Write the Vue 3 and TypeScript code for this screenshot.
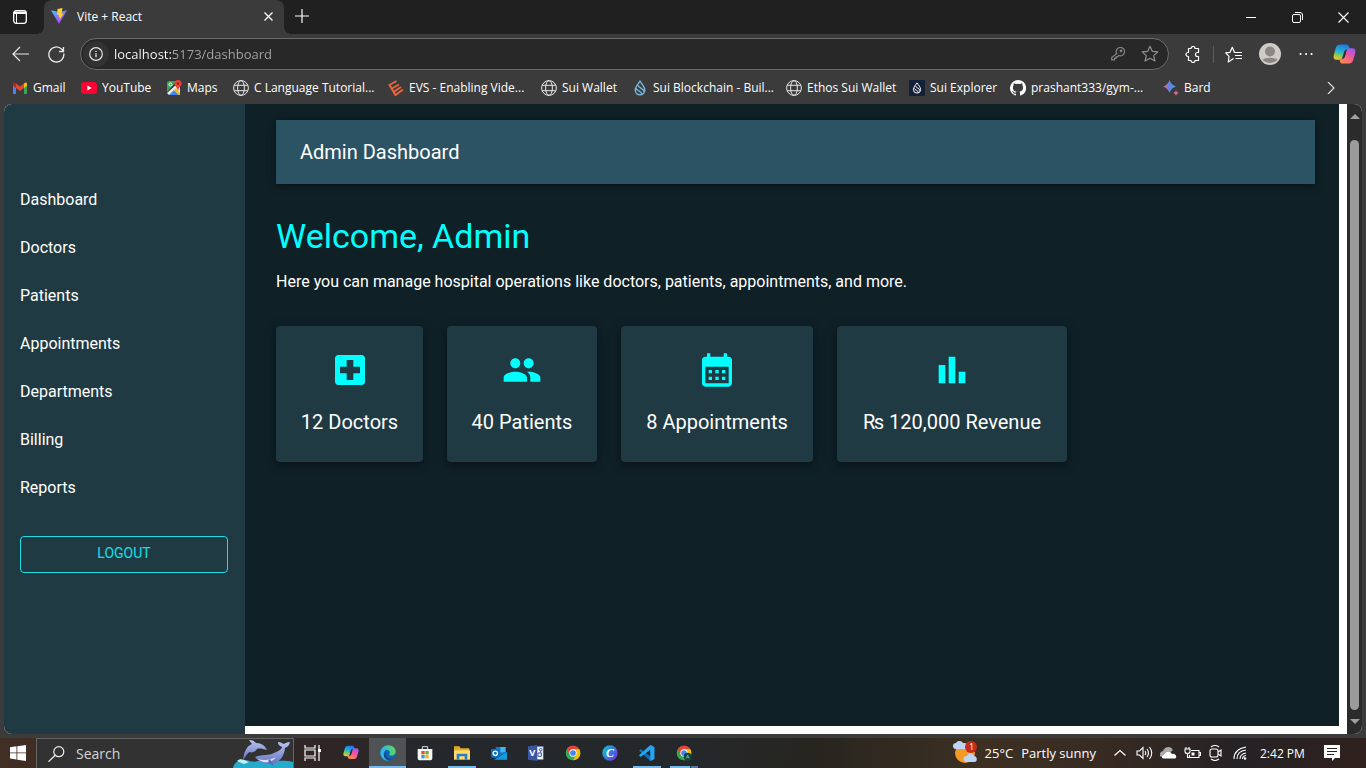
<script setup lang="ts">
import { ref } from 'vue'

interface Item { label: string; icon: string }
interface TaskApp extends Item { state?: 'active' | 'open' | 'multi' }

const address = ref('localhost:5173/dashboard')
const search = ref('')

const globe = '<g fill="none" stroke="#e8e8e8" stroke-width="1"><circle cx="8" cy="8" r="7.4"/><ellipse cx="8" cy="8" rx="3.4" ry="7.4"/><path d="M1.3 5.3h13.4M1.3 10.7h13.4"/></g>'
const drop = 'M8 1.2C6 4.2 3.2 7 3.2 10a4.8 4.8 0 0 0 9.6 0C12.800 7 10 4.200 8 1.200zM6 5.200c.3 2.800 6.300 3.300 6.200 6.800M3.800 8.300c1.400 3 5.800 2.200 6 6'

const icons: Record<string, string> = {
  gmail: '<path fill="#4285f4" d="M1 4v10h3V7z"/><path fill="#34a853" d="M12 7v7h3V4z"/><path fill="#fbbc04" d="M12 3.500V8l3-2.300V4c0-1.500-1.500-2-3-.5z"/><path fill="#c5221f" d="M1 4v1.700L4 8V3.500C2.500 2.300 1 2.600 1 4z"/><path fill="#ea4335" d="M4 3.500 8 6.600l4-3.100V8l-4 3-4-3z"/>',
  youtube: '<rect x="0" y="2" width="16" height="12" rx="3" fill="#ff0033"/><path fill="#fff" d="M6.300 5.400v5.200L10.800 8z"/>',
  maps: '<path fill="#34a853" d="M1 3a2 2 0 0 1 2-2h8L1 12z"/><path fill="#e8eaed" d="m1 13 10-9 3 3v8H3z"/><path fill="#4285f4" d="m3 15 5-5 5 5z"/><path fill="#fbbc04" d="m8 10 2-2 4 5v2h-1z"/><circle cx="4.500" cy="4.500" r="1.500" fill="none" stroke="#fff"/><path fill="#ea4335" d="M12 0a3.500 3.500 0 0 0-3.500 3.500C8.500 6 11.300 7 12 11c.7-4 3.500-5 3.500-7.500A3.500 3.500 0 0 0 12 0z"/><circle cx="12" cy="3.500" r="1.200" fill="#901c16"/>',
  globe,
  evs: '<path fill="none" stroke="#e8643c" stroke-width="2" d="M8.500 1 1.500 5l6 10 7.500-5.500M4 8.500l7-4M6.300 11.500 13 7"/>',
  sui: `<path fill="none" stroke="#78b4dc" stroke-width="1.400" d="${drop}"/>`,
  explorer: `<path fill="#142038" d="M0 0h16v16H0z"/><path fill="none" stroke="#fff" stroke-width="1.300" transform="translate(2 2) scale(.75)" d="${drop}"/>`,
  github: '<path fill="#fff" d="M8 0a8 8 0 0 0-2.500 15.600c.4.100.5-.2.500-.4v-1.500c-2.200.5-2.700-1-2.700-1-.4-.9-.9-1.200-.9-1.200-.7-.5.1-.5.100-.5.800.1 1.200.8 1.200.8.7 1.200 1.900.9 2.300.7.1-.5.300-.9.500-1.100-1.800-.2-3.600-.9-3.600-4 0-.9.300-1.600.8-2.100-.1-.2-.4-1 .1-2.100 0 0 .7-.2 2.200.8a8 8 0 0 1 4 0c1.500-1 2.200-.8 2.200-.8.4 1.100.2 1.900.1 2.100.5.600.8 1.300.8 2.100 0 3.100-1.900 3.800-3.700 4 .3.300.6.800.6 1.500v2.300c0 .2.100.5.600.4A8 8 0 0 0 8 0z"/>',
  bard: '<path fill="url(#bard)" d="M6.500 0C7.800 3.600 9.400 5.200 13 6.500 9.400 7.800 7.800 9.400 6.500 13 5.200 9.400 3.600 7.800 0 6.500 3.600 5.200 5.200 3.600 6.500 0z"/><path fill="#d86890" d="M13 10c.6 1.900 1.100 2.400 3 3-1.900.6-2.400 1.100-3 3-.6-1.900-1.100-2.400-3-3 1.900-.6 2.400-1.100 3-3z"/>',
  copilot: '<path fill="url(#copBlue)" d="M8 1h6c1.500 0 2.400 1 2.800 2.500L17.500 6H15c-2 0-3 1-3.500 3L9.800 14.500C9.300 16.200 8 17 6.500 17H4c-3 0-4-2-3.200-5L3 4.500C3.700 2 5.500 1 8 1z"/><path fill="url(#copPink)" d="M16 21h-6c-1.500 0-2.400-1-2.800-2.500L6.500 16H9c2 0 3-1 3.500-3l1.700-5.500C14.700 5.800 16 5 17.500 5H20c3 0 4 2 3.200 5L21 17.500c-.7 2.500-2.500 3.500-5 3.500z"/><path fill="#2a2a30" d="M12.800 8.500h1.200l-2.300 6.300c-.3.600-.8.700-1.400.7z"/>',
  edge: '<circle cx="12" cy="12" r="11.500" fill="#0c67b8"/><path fill="url(#edgeTop)" d="M.6 11C1.200 4.800 6 .5 12 .5c6.600 0 11.500 4.300 11.500 9.300 0 3.700-2.900 6-6 6-2.200 0-3.700-.7-3.700-1.500 0-.6 1-1.200 1-2.900C14.800 9 12.700 7 9.500 7 5 7 1.500 9 .6 11z"/><path fill="#35b9e8" d="M.6 11C2 8 5.500 6.500 9.500 7c-2.500 1-4 3.400-4 6.500 0 5 3 9 7 10C5.500 24 .2 18 .6 11z"/><path fill="#174b8c" d="M9.600 11c-2.500 5 2 10.500 8 9.500 2-.4 3-1 4-1.700-4 4.500-12 5-15 0-1.500-3-.5-6 3-7.800z"/>',
  store: '<path fill="none" stroke="#ddd" stroke-width="1.500" d="M8 6V2.500h8V6"/><path fill="#f6f6f6" d="M1 6h22v13a4 4 0 0 1-4 4H5a4 4 0 0 1-4-4z"/><path fill="#e85227" d="M6.500 9h5v5h-5z"/><path fill="#72ad20" d="M12.500 9h5v5h-5z"/><path fill="#28a1dc" d="M6.500 15h5v5h-5z"/><path fill="#f5b51a" d="M12.500 15h5v5h-5z"/>',
  files: '<path fill="#e6a824" d="M0 2h8l2 3h13v16H0z"/><path fill="#ffdc6b" d="M0 8h24v14H0z"/><path fill="#287fc8" d="M4 13h16v9h-4v-5H8v5H4z"/>',
  outlook: '<path fill="#1976c5" d="M7 3h14v13H7z"/><path fill="#42b8f0" d="M14 3h8v8h-8z"/><path fill="#083f86" d="m5 11 9 5 10-6v12H5z"/><path fill="#1599dd" d="m5 22 19-12v12z"/><rect x="0" y="6" width="13" height="13" rx="1.500" fill="#096dc6"/><circle cx="6.500" cy="12.500" r="3.200" fill="none" stroke="#fff" stroke-width="2"/>',
  visio: '<path fill="#fff" stroke="#3955a3" stroke-width="1" d="M12 2h11v20H12z"/><path fill="#3955a3" d="M0 2 14 0v24L0 22z"/><text x="2" y="17" fill="#fff" font-family="Open Sans, sans-serif" font-size="14" font-weight="700">V</text><g fill="none" stroke="#3955a3" stroke-width="1.500"><circle cx="19" cy="7" r="2"/><path d="M15 12h5v5h-5zM19 9v3"/></g>',
  chrome: '<circle cx="12" cy="12" r="11" fill="#34a853"/><path fill="#ea4335" d="M2.500 6.500A11 11 0 0 1 21.500 6.500H12L7.500 15z"/><path fill="#fbbc04" d="M12 6.500h9.500A11 11 0 0 1 12 23l5-8z"/><circle cx="12" cy="12" r="5.500" fill="#fff"/><circle cx="12" cy="12" r="4.300" fill="#4285f4"/>',
  canva: '<circle cx="12" cy="12" r="11.500" fill="url(#canva)"/><text x="6" y="18" fill="#fff" font-family="Liberation Serif, serif" font-style="italic" font-weight="700" font-size="18">C</text>',
  code: '<path fill="#0a72b9" d="m17 0 6 3v18l-6 3L0 8.500 2.500 6 17 17z"/><path fill="#27a5f0" d="m17 0 6 3v18l-6 3V7L2.500 18 0 15.500z"/>',
  hospital: '<path d="M19 3H5c-1.100 0-1.990.9-1.990 2L3 19c0 1.100.9 2 2 2h14c1.100 0 2-.9 2-2V5c0-1.100-.9-2-2-2zm-1 11h-4v4h-4v-4H6v-4h4V6h4v4h4v4z"/>',
  people: '<path d="M16 11c1.660 0 2.990-1.340 2.990-3S17.660 5 16 5c-1.660 0-3 1.340-3 3s1.340 3 3 3zm-8 0c1.660 0 2.990-1.340 2.990-3S9.660 5 8 5C6.340 5 5 6.340 5 8s1.340 3 3 3zm0 2c-2.330 0-7 1.170-7 3.500V19h14v-2.500c0-2.330-4.670-3.500-7-3.500zm8 0c-.29 0-.62.020-.97.050 1.160.84 1.970 1.970 1.970 3.450V19h6v-2.500c0-2.330-4.670-3.500-7-3.500z"/>',
  calendar: '<path d="M19 4h-1V2h-2v2H8V2H6v2H5c-1.110 0-1.990.9-1.990 2L3 20c0 1.100.89 2 2 2h14c1.100 0 2-.9 2-2V6c0-1.100-.9-2-2-2zm0 16H5V10h14v10zM9 14H7v-2h2v2zm4 0h-2v-2h2v2zm4 0h-2v-2h2v2zm-8 4H7v-2h2v2zm4 0h-2v-2h2v2zm4 0h-2v-2h2v2z"/>',
  chart: '<path d="M4 9h4v11H4zm12 4h4v7h-4zm-6-9h4v16h-4z"/>'
}
icons.profile = icons.chrome + '<circle cx="17.500" cy="17.500" r="6" fill="#11463f"/><path fill="none" stroke="#8fc7b8" d="m15.500 20 2-5 2 5m-3.300-1.500h2.600"/>'

const bookmarks: Item[] = [
  { label: 'Gmail', icon: 'gmail' },
  { label: 'YouTube', icon: 'youtube' },
  { label: 'Maps', icon: 'maps' },
  { label: 'C Language Tutorial...', icon: 'globe' },
  { label: 'EVS - Enabling Vide...', icon: 'evs' },
  { label: 'Sui Wallet', icon: 'globe' },
  { label: 'Sui Blockchain - Buil...', icon: 'sui' },
  { label: 'Ethos Sui Wallet', icon: 'globe' },
  { label: 'Sui Explorer', icon: 'explorer' },
  { label: 'prashant333/gym-...', icon: 'github' },
  { label: 'Bard', icon: 'bard' }
]

const sections = ['Dashboard', 'Doctors', 'Patients', 'Appointments', 'Departments', 'Billing', 'Reports']

const stats: Item[] = [
  { label: '12 Doctors', icon: 'hospital' },
  { label: '40 Patients', icon: 'people' },
  { label: '8 Appointments', icon: 'calendar' },
  { label: '₨ 120,000 Revenue', icon: 'chart' }
]

const apps: TaskApp[] = [
  { label: 'Copilot', icon: 'copilot' },
  { label: 'Microsoft Edge', icon: 'edge', state: 'active' },
  { label: 'Microsoft Store', icon: 'store' },
  { label: 'File Explorer', icon: 'files', state: 'open' },
  { label: 'Outlook', icon: 'outlook' },
  { label: 'Visio', icon: 'visio' },
  { label: 'Google Chrome', icon: 'chrome' },
  { label: 'Canva', icon: 'canva' },
  { label: 'Visual Studio Code', icon: 'code', state: 'open' },
  { label: 'Chrome profile', icon: 'profile', state: 'multi' }
]
</script>

<template>
  <div class="desktop">
    <svg class="defs" width="0" height="0" aria-hidden="true">
      <defs>
        <linearGradient id="bard" x1="0" x2="1"><stop offset="0" stop-color="#e8647c" /><stop offset=".6" stop-color="#4f88f4" /><stop offset="1" stop-color="#50a0e8" /></linearGradient>
        <linearGradient id="copBlue" x1=".6" y1="0" x2=".3" y2="1"><stop offset="0" stop-color="#1a78e8" /><stop offset=".5" stop-color="#25b6d2" /><stop offset=".75" stop-color="#8ccb50" /><stop offset="1" stop-color="#f0c830" /></linearGradient>
        <linearGradient id="copPink" x1=".8" y1="0" x2=".2" y2="1"><stop offset="0" stop-color="#9a58f0" /><stop offset=".45" stop-color="#f0559c" /><stop offset="1" stop-color="#ff8a48" /></linearGradient>
        <linearGradient id="edgeTop" x1="0" x2="1"><stop offset="0" stop-color="#2bb4e8" /><stop offset="1" stop-color="#5fd85a" /></linearGradient>
        <linearGradient id="canva" x1="0" y1=".2" x2="1" y2=".9"><stop offset="0" stop-color="#10c4cf" /><stop offset=".5" stop-color="#3478dc" /><stop offset="1" stop-color="#7d2ae8" /></linearGradient>
        <linearGradient id="vite" x1="0" y1="0" x2=".6" y2="1"><stop offset="0" stop-color="#41c8ff" /><stop offset="1" stop-color="#bd34fe" /></linearGradient>
        <linearGradient id="whale" x1="0" y1="0" x2="0" y2="1"><stop offset="0" stop-color="#b9c4f4" /><stop offset="1" stop-color="#6673bd" /></linearGradient>
      </defs>
    </svg>

    <header class="browser">
      <div class="tabstrip">
        <button class="tab-menu" aria-label="Tab actions">
          <svg width="14" height="14" viewBox="0 0 14 14"><rect x=".7" y=".7" width="12.600" height="12.600" rx="2.500" fill="none" stroke="#fff" stroke-width="1.300" /><path fill="#fff" d="M1 1.500h12V4H1z" /><path stroke="#fff" d="M3.500 4v9" /></svg>
        </button>
        <div class="tab">
          <svg width="16" height="16" viewBox="0 0 16 16"><path fill="url(#vite)" d="M0 2.200 8 16 16 2.200 8.500 4z" /><path fill="#ffd028" d="m11.500 0-5 1-.5 6 2-.4-.5 3 1.500-.4-.6 3L12.500 5.500l-2 .4z" /></svg>
          <span class="tab-title">Vite + React</span>
          <button aria-label="Close tab"><svg width="9" height="9" viewBox="0 0 9 9"><path stroke="#fff" stroke-width="1.300" d="m.5.5 8 8m0-8-8 8" /></svg></button>
        </div>
        <button class="new-tab" aria-label="New tab"><svg width="14" height="14" viewBox="0 0 14 14"><path stroke="#fff" stroke-width="1.200" d="M7 0v14M0 7h14" /></svg></button>
        <div class="window-buttons">
          <button aria-label="Minimize"><svg width="10" height="10" viewBox="0 0 10 10"><path stroke="#fff" d="M0 5.500h10" /></svg></button>
          <button aria-label="Restore"><svg width="11" height="11" viewBox="0 0 11 11"><g fill="none" stroke="#fff"><rect x=".5" y="2.500" width="8" height="8" rx="1.500" /><path d="M3 .5h5a2.500 2.500 0 0 1 2.500 2.500v5" /></g></svg></button>
          <button aria-label="Close"><svg width="11" height="11" viewBox="0 0 11 11"><path stroke="#fff" stroke-width="1.200" d="m.5.5 10 10m0-10-10 10" /></svg></button>
        </div>
      </div>

      <div class="toolbar">
        <div class="nav-buttons">
          <button aria-label="Back"><svg width="17" height="16" viewBox="0 0 17 16"><path fill="none" stroke="#e8e8e8" stroke-width="1.200" d="M8 1 1 8l7 7M1 8h16" /></svg></button>
          <button aria-label="Refresh"><svg width="17" height="17" viewBox="0 0 17 17"><path fill="none" stroke="#e8e8e8" stroke-width="1.300" d="M15.800 7.500a7.500 7.500 0 1 1-2-4.200L15.500 5M15.500 1v4.500H11" /></svg></button>
        </div>
        <div class="address">
          <button class="site-info" aria-label="Site information"><svg width="14" height="14" viewBox="0 0 14 14"><circle cx="7" cy="7" r="6.300" fill="none" stroke="#e4e4e4" stroke-width="1.200" /><path stroke="#e4e4e4" stroke-width="1.300" d="M7 6.200v4M7 3.700V5" /></svg></button>
          <input v-model="address" aria-label="Address" type="text" spellcheck="false">
          <button aria-label="Saved passwords"><svg width="14" height="14" viewBox="0 0 14 14"><g fill="none" stroke="#858585" stroke-width="1.200"><path d="M5.700 6.600A4.200 4.200 0 1 1 7.800 8.500L6.500 9.800H5v1.500H3.500v1.500H.7v-2.200z" /><circle cx="10" cy="4" r=".8" /></g></svg></button>
          <button aria-label="Add to favorites"><svg width="18" height="18" viewBox="0 0 18 18"><path fill="none" stroke="#909090" stroke-width="1.200" stroke-linejoin="round" d="m9 1.300 2.300 5 5.500.6-4.100 3.700 1.200 5.400L9 13.300 4.100 16l1.200-5.400L1.200 6.900l5.500-.6z" /></svg></button>
        </div>
        <div class="tools">
          <button class="extensions" aria-label="Extensions"><svg width="16" height="17" viewBox="0 0 16 17"><path fill="none" stroke="#fff" stroke-width="1.200" stroke-linejoin="round" d="M3.500 2.500H6a2 2 0 0 1 4 0h3.500v4h-1a2 2 0 1 0 0 4h1v4H10a2 2 0 0 1-4 0H3.500v-4H3a2 2 0 0 1 0-4h.5z" /></svg></button>
          <button class="favorites" aria-label="Favorites"><svg width="17" height="17" viewBox="0 0 17 17"><path fill="none" stroke="#fff" stroke-width="1.200" stroke-linejoin="round" d="M11 6.500H9.500L7.300 1.300 5 6.300l-4.300.6 3.300 3.500L3.300 16l5.200-3.500M11 6.500h6M10 9.500h7M10.500 12.500H17" /></svg></button>
          <button aria-label="Profile"><svg width="22" height="22" viewBox="0 0 22 22"><circle cx="11" cy="11" r="11" fill="#cfcbc6" /><circle cx="11" cy="8.500" r="5" fill="#8b8783" /><path fill="#8b8783" d="M3.500 17c2-3 13-3 15 0a11 11 0 0 1-15 0z" /></svg></button>
          <button aria-label="Settings and more"><svg width="14" height="4" viewBox="0 0 14 4"><path stroke="#fff" stroke-width="2" stroke-linecap="round" d="M1.500 2h.1M7 2h.1M12.500 2h.1" /></svg></button>
          <button class="copilot" aria-label="Copilot"><svg width="23" height="22" viewBox="0 0 24 22" v-html="icons.copilot"></svg></button>
        </div>
      </div>

      <nav class="bookmarks" aria-label="Favorites bar">
        <a v-for="b in bookmarks" :key="b.label" href="#"><svg width="16" height="16" viewBox="0 0 16 16" v-html="icons[b.icon]"></svg><span>{{ b.label }}</span></a>
        <button aria-label="More favorites"><svg width="8" height="12" viewBox="0 0 8 12"><path fill="none" stroke="#ddd" stroke-width="1.200" d="m1 0 6 6-6 6" /></svg></button>
      </nav>
    </header>

    <div class="viewport">
      <div class="page">
        <aside class="sidebar">
          <nav aria-label="Sections"><a v-for="s in sections" :key="s" href="#">{{ s }}</a></nav>
          <button class="logout">LOGOUT</button>
        </aside>
        <main class="content">
          <header class="appbar">Admin Dashboard</header>
          <h1>Welcome, Admin</h1>
          <p>Here you can manage hospital operations like doctors, patients, appointments, and more.</p>
          <div class="cards">
            <section v-for="s in stats" :key="s.label" class="card">
              <svg width="40" height="40" viewBox="0 0 24 24" fill="#00ffff" v-html="icons[s.icon]"></svg>
              <h2>{{ s.label }}</h2>
            </section>
          </div>
        </main>
      </div>
      <div class="scrollbar" aria-hidden="true"><i class="up"></i><i class="thumb"></i><i class="down"></i></div>
    </div>

    <footer class="taskbar">
      <button class="start" aria-label="Start"><svg width="16" height="16" viewBox="0 0 16 16"><path fill="#fff" d="m0 2.200 6.500-.9v6.200H0zM7.300 1.200 16 0v7.500H7.300zM0 8.300h6.500v6.200L0 13.600zM7.300 8.300H16V16l-8.700-1.200z" /></svg></button>
      <label class="search">
        <svg width="17" height="16" viewBox="0 0 17 16"><g fill="none" stroke="#eee" stroke-width="1.200"><circle cx="10.800" cy="5.700" r="5" /><path d="m7.200 9.300-6.700 6.400" /></g></svg>
        <input v-model="search" aria-label="Search" type="search" placeholder="Search">
        <svg class="dolphins" width="60" height="28" viewBox="0 0 60 28"><path fill="#28aacb" d="M0 28c1-5 5-8 10-8 7 0 9 3 15 1 6-1 8 2 15 1s10-2 20 0v6z" /><path fill="#bff2f6" d="M4 21c4-4 8 0 12 1l-5 2z" /><path fill="url(#whale)" d="M10 20c1-9 4-14 9-16l-3-4c4 0 5 1 7 3 6 0 9 3 11 7-4-1-7-2-10-1-2 3-5 4-7 3-3 1-4 4-7 8z" /><path fill="url(#whale)" d="M22 17c8-3 13-1 19-4 5-2 8-4 8-6-3-1-4-3-4-5 3 0 5 2 6 2 1-1 3-2 6-2-1 4-3 5-5 6-1 9-6 15-13 16-8 0-13-2-17-7z" /><path fill="#dae0ff" d="M25 19c6 2 13 1 18-2-3 5-12 8-18 2z" /><path fill="#5b67ae" d="m37 19 4 8-6-6z" /></svg>
      </label>
      <button class="task-view" aria-label="Task view"><svg width="17" height="16" viewBox="0 0 17 16"><g fill="none" stroke="#fff" stroke-width="1.200"><path d="M1 0v3h10V0M1 16v-3h10v3M1 5h10v6H1zM15 0v16" /></g><path fill="#fff" d="M14 4h3v3h-3z" /></svg></button>
      <button v-for="a in apps" :key="a.label" class="app" :class="a.state" :aria-label="a.label"><svg width="16" height="16" viewBox="0 0 24 24" v-html="icons[a.icon]"></svg></button>

      <div class="tray">
        <button class="weather">
          <svg width="24" height="24" viewBox="0 0 24 24"><circle cx="12" cy="12" r="10" fill="#f59a24" /><path fill="#bed4f5" d="M3 8a3 3 0 0 1 0-6c2-3 6-2 7 0 3 0 4 2 3 6zM13 21a3 3 0 0 1 1-6c2-4 6-3 7 0 3 0 4 5 1 6z" /><circle cx="18" cy="6" r="6" fill="#c42b1c" /><text x="16" y="9" fill="#fff" font-family="Open Sans, sans-serif" font-size="9">1</text></svg>
          <span>25°C</span><span>Partly sunny</span>
        </button>
        <button aria-label="Show hidden icons"><svg width="12" height="8" viewBox="0 0 12 8"><path fill="none" stroke="#fff" stroke-width="1.200" d="m.5 6.500 5.500-5 5.500 5" /></svg></button>
        <button aria-label="Volume"><svg width="17" height="14" viewBox="0 0 17 14"><path fill="none" stroke="#fff" stroke-width="1.100" d="M1 5h2.500L7 1.500v11L3.500 9H1zM9 5q1.500 2 0 4M11 3q3 4 0 8M13.500 1q4.500 6 0 12" /></svg></button>
        <button aria-label="OneDrive"><svg width="17" height="12" viewBox="0 0 17 12"><path fill="#a9a9a9" d="M1 10a3.500 3.500 0 0 1 2-6c2-5 8-5 10-1l-5 4z" /><path fill="#fff" d="M3 11.500c-2-1-1-3.500 1-3.500 2-4 6-4 8-1 3-1 6 3 3 4.500z" /></svg></button>
        <button aria-label="Battery"><svg width="17" height="13" viewBox="0 0 17 13"><g fill="none" stroke="#fff" stroke-width="1.100"><path d="M7 3.500h8v7H5.500V8M15 5.500h1.500v3H15M1 2h5v2.500q0 2-2.500 2T1 4.500zM2 2V0M5 2V0M3.500 6v4.500h2" /></g><path fill="#fff" d="M7.500 5.500h3v3h-3z" /></svg></button>
        <button aria-label="Meet Now"><svg width="14" height="16" viewBox="0 0 14 16"><g fill="none" stroke="#fff" stroke-width="1.100"><rect x="1" y="4" width="8" height="8" rx="2" /><path d="m9 7 3-2v6L9 9M2 2q4-3 8 0M2 14q4 3 8 0" /></g></svg></button>
        <button aria-label="Network"><svg width="14" height="14" viewBox="0 0 14 14"><g fill="none" stroke="#fff" stroke-width="1.100"><path d="M1 13Q1 3 13 1M4 13q0-8 9-9M7 13q0-5 6-6M9.500 13q0-3 3.500-3.500" /></g><circle cx="12" cy="12.500" r="1.300" fill="#fff" /></svg></button>
        <span class="clock">2:42 PM</span>
        <button class="notice" aria-label="Notifications"><svg width="16" height="16" viewBox="0 0 16 16"><path fill="#fff" d="M0 0h16v13h-5l-3 3v-3H0z" /><path stroke="#292220" stroke-width="1.200" d="M3 3.500h10M3 6.500h10M3 9.500h7" /></svg></button>
      </div>
    </footer>
  </div>
</template>

<style>
body { margin: 0; }
</style>

<style scoped>
* { box-sizing: border-box; }
svg { display: block; flex: none; }
button { padding: 0; border: 0; background: none; color: inherit; font: inherit; display: flex; align-items: center; justify-content: center; flex: none; }
a { color: inherit; text-decoration: none; }
input { min-width: 0; padding: 0; border: 0; outline: 0; background: none; font: inherit; }
.defs { position: absolute; }

.desktop { min-height: 100vh; display: flex; flex-direction: column; overflow: hidden; background: #3b3b3b; color: #fff; font-family: "Open Sans", "Noto Sans", sans-serif; font-size: 12px; }

.tabstrip { height: 34px; display: flex; background: #202020; }
.tab-menu { width: 40px; margin-right: 4px; }
.tab { position: relative; width: 240px; display: flex; align-items: center; padding: 0 11px 2px 7px; background: #3b3b3b; border-radius: 8px 8px 0 0; }
.tab::before, .tab::after { content: ""; position: absolute; bottom: 0; width: 8px; height: 8px; }
.tab::before { left: -8px; background: radial-gradient(circle at 0 0, #202020 8px, #3b3b3b 8px); }
.tab::after { right: -8px; background: radial-gradient(circle at 100% 0, #202020 8px, #3b3b3b 8px); }
.tab-title { flex: 1; margin-left: 10px; }
.new-tab { width: 36px; padding-bottom: 3px; }
.window-buttons { display: flex; margin-left: auto; }
.window-buttons button { width: 46px; }

.toolbar { height: 40px; display: flex; align-items: center; }
.nav-buttons { display: flex; width: 80px; padding: 0 2px; }
.nav-buttons button { width: 36px; }
.address { flex: 1; height: 32px; display: flex; align-items: center; gap: 16px; padding: 0 9px 0 2px; border: 1px solid #6b6b6b; border-radius: 16px; background: #282828; }
.site-info { width: 26px; height: 26px; border-radius: 13px; background: #323232; }
.address input { flex: 1; margin-left: -11px; height: 24px; font-size: 13px; color: transparent; background: linear-gradient(90deg, #fff 57px, #a5a5a5 57px); background-clip: text; -webkit-background-clip: text; }
.tools { width: 197px; display: flex; align-items: center; }
.tools button { width: 36px; }
.tools .extensions { width: 44px; padding-left: 4px; }
.tools .favorites { width: 39px; border-left: 1px solid #5b5b5b; }
.tools .copilot { width: 40px; }

.bookmarks { height: 30px; padding: 0 0 2px 12px; display: grid; grid-template-columns: 69px 85px 67px 155px 153px 91px 154px 123px 101px 153px 1fr 39px; align-items: center; }
.bookmarks a { display: flex; align-items: center; gap: 5px; white-space: nowrap; line-height: 16px; }
.bookmarks button { justify-content: flex-start; }

.viewport { flex: 1; display: flex; margin: 0 4px 4px; border-radius: 8px; overflow: hidden; background: #fff; font-family: Roboto, sans-serif; font-size: 16px; line-height: 24px; }
.page { flex: 1; display: flex; }
.sidebar { width: 241px; padding: 72px 17px 16px 16px; background: #203a43; }
.sidebar a { display: flex; align-items: center; height: 48px; }
.logout { width: 100%; margin-top: 24px; height: 37px; padding-bottom: 4px; border: 1px solid #22dce3; border-radius: 4px; color: #12e0e8; font-size: 14px; }
.content { flex: 1; margin: 0 8px 8px 0; padding: 16px 24px 24px 31px; background: #0f2027; }
.appbar { height: 64px; padding: 0 24px; display: flex; align-items: center; background: #2c5364; font-size: 20px; box-shadow: 0 2px 4px rgba(0,0,0,.3), 0 2px 10px rgba(0,0,0,.18); }
h1 { margin: 32px 0 14px; color: #00ffff; font-size: 34px; font-weight: 400; line-height: 40px; }
p { margin: 0; }
.cards { margin-top: 32px; display: grid; grid-template-columns: 147px 150px 192px 230px; gap: 24px; }
.card { padding: 24px 0; display: flex; flex-direction: column; align-items: center; gap: 16px; background: #203a43; border-radius: 4px; box-shadow: 0 3px 5px rgba(0,0,0,.25), 0 2px 14px rgba(0,0,0,.18); }
h2 { margin: 0; font-size: 20px; line-height: 32px; font-weight: 400; white-space: nowrap; }
.scrollbar { width: 15px; display: flex; flex-direction: column; align-items: center; padding: 10px 0; background: #2b2b2b; }
.up, .down { border: 5px solid transparent; border-top: 0; border-bottom: 5px solid #a0a0a0; }
.down { border-top: 5px solid #a0a0a0; border-bottom: 0; }
.thumb { flex: 1; width: 9px; margin: 21px 0 9px; border-radius: 5px; background: #9b9b9b; }

.taskbar { height: 30px; display: flex; background: linear-gradient(90deg, #412e24 0, #2d2526 25%, #24282c 32%, #24282b 50%, #28251f 60%, #3d3022 72%, #382b22 80%, #252225 91%, #30211d 100%); }
.start { width: 36px; }
.search { width: 258px; display: flex; align-items: center; padding-left: 11px; border: 1px solid #646464; border-bottom: 0; background: #323232; font-size: 14px; }
.search input { flex: 1; margin-left: 11px; color: #fff; appearance: none; }
.search input::placeholder { color: #d4d4d4; opacity: 1; }
.dolphins { align-self: flex-end; }
.task-view { width: 38px; padding-right: 2px; }
.app { width: 37px; border: solid transparent; border-width: 2px 0; }
.active { border-bottom-color: #76b9ed; background: #4f5355; }
.open { background: linear-gradient(#76b9ed, #76b9ed) 50% 100% / 28px 2px no-repeat border-box; }
.multi { background: linear-gradient(90deg, #76b9ed 20px, #253b4c 20px 21px, #4f7ca0 21px) 50% 100% / 28px 2px no-repeat border-box; }
.tray { display: flex; align-items: center; margin-left: auto; padding-right: 16px; }
.tray button { width: 24px; height: 100%; }
.tray .weather { width: auto; gap: 8px; margin-right: 12px; font-size: 13px; }
.clock { width: 52px; padding-left: 8px; white-space: nowrap; }
.tray .notice { width: 36px; margin-left: 10px; }
</style>
